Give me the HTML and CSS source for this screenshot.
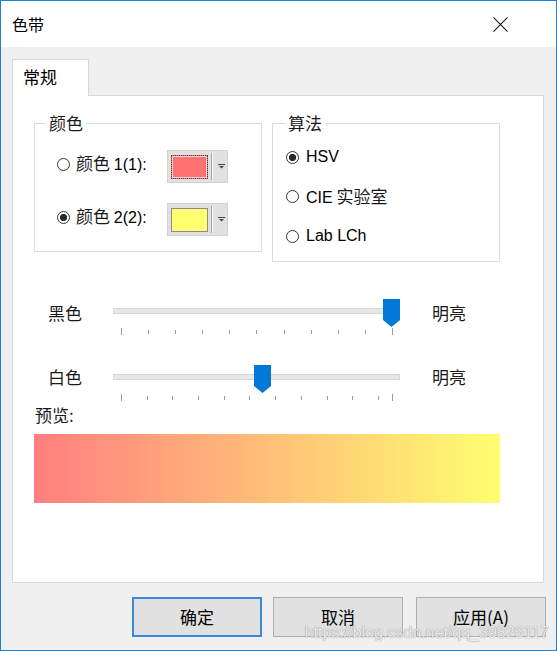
FILE: index.html
```html
<!DOCTYPE html>
<html lang="zh-CN">
<head>
<meta charset="utf-8">
<title>色带</title>
<link rel="stylesheet" href="styles.css">
</head>
<body>
<div class="window">
  <div class="titlebar">
    <span class="title">色带</span>
    <svg class="close" width="16" height="16" viewBox="0 0 16 16"><path d="M0.5 0.5 L15.5 15.5 M15.5 0.5 L0.5 15.5" stroke="#111" stroke-width="1.1" fill="none"/></svg>
  </div>
  <div class="body">
    <div class="tabs"><div class="tab">常规</div></div>
    <div class="panel">
      <div class="groups">
        <fieldset class="group group-color">
          <legend>颜色</legend>
          <div class="color-row">
            <span class="radio"></span>
            <span class="rlabel">颜色 <span class="lat">1(1):</span></span>
            <div class="swatch">
              <span class="chip chip-red"></span><span class="sep"></span>
              <svg class="arrow" width="7" height="5" viewBox="0 0 7 5"><path d="M0 0.5 H7" stroke="#444" stroke-width="1"/><path d="M1 2 H6 L3.5 4.6 Z" fill="#444"/></svg>
            </div>
          </div>
          <div class="color-row">
            <span class="radio on"></span>
            <span class="rlabel">颜色 <span class="lat">2(2):</span></span>
            <div class="swatch">
              <span class="chip chip-yellow"></span><span class="sep"></span>
              <svg class="arrow" width="7" height="5" viewBox="0 0 7 5"><path d="M0 0.5 H7" stroke="#444" stroke-width="1"/><path d="M1 2 H6 L3.5 4.6 Z" fill="#444"/></svg>
            </div>
          </div>
        </fieldset>
        <fieldset class="group group-algo">
          <legend>算法</legend>
          <div class="algo-row"><span class="radio on"></span><span class="lat">HSV</span></div>
          <div class="algo-row"><span class="radio"></span><span><span class="lat">CIE</span> 实验室</span></div>
          <div class="algo-row"><span class="radio"></span><span class="lat">Lab LCh</span></div>
        </fieldset>
      </div>

      <div class="slider-row first">
        <span class="slabel">黑色</span>
        <div class="slider">
          <div class="track"></div>
          <div class="ticks">
            <span class="tk long"></span><span class="tk"></span><span class="tk"></span><span class="tk"></span><span class="tk"></span><span class="tk"></span><span class="tk"></span><span class="tk"></span><span class="tk"></span><span class="tk"></span><span class="tk long"></span>
          </div>
          <span class="thumb thumb-black"></span>
        </div>
        <span class="slabel right">明亮</span>
      </div>

      <div class="slider-row second">
        <span class="slabel">白色</span>
        <div class="slider">
          <div class="track"></div>
          <div class="ticks">
            <div class="tick-group">
              <span class="tk long"></span><span class="tk"></span><span class="tk"></span><span class="tk"></span><span class="tk"></span><span class="tk"></span><span class="tk"></span><span class="tk"></span><span class="tk"></span><span class="tk"></span><span class="tk"></span>
            </div>
            <span class="tk long"></span>
          </div>
          <span class="thumb thumb-white"></span>
        </div>
        <span class="slabel right">明亮</span>
      </div>

      <div class="preview-label">预览:</div>
      <div class="preview"></div>
    </div>
    <div class="buttons">
      <button class="btn default">确定</button>
      <button class="btn">取消</button>
      <button class="btn apply">应用(A)</button>
    </div>
  </div>
  <div class="watermark">https://blog.csdn.net/qq_39826117</div>
</div>
</body>
</html>
```

FILE: styles.css
```css
html, body {
  margin: 0;
  padding: 0;
  background: #ffffff;
}

body {
  font-family: "Noto Sans CJK SC", "Liberation Sans", sans-serif;
  font-size: 17px;
  line-height: 20px;
  color: #111;
}

.window {
  position: relative;
  width: 557px;
  height: 651px;
  box-sizing: border-box;
  border: 1px solid #1883d7;
  display: flex;
  flex-direction: column;
}

.lat {
  font-family: "Liberation Sans", Arial, sans-serif;
  font-size: 16px;
  color: #000;
}

/* title bar */
.titlebar {
  height: 46px;
  flex: none;
  background: #fff;
  display: flex;
  align-items: center;
  justify-content: space-between;
  padding: 0 48px 0 11px;
}

.title {
  font-size: 16px;
  color: #000;
}

.close {
  display: block;
  width: 15px;
  height: 15px;
  margin-top: 1px;
}

/* body */
.body {
  flex: 1;
  background: #f0f0f0;
  padding: 12px 10px 0 11px;
  display: flex;
  flex-direction: column;
}

.tabs {
  display: flex;
}

.tab {
  position: relative;
  z-index: 1;
  width: 77px;
  height: 37px;
  box-sizing: border-box;
  border: 1px solid #d9d9d9;
  border-bottom: none;
  background: #fff;
  margin-bottom: -1px;
  padding: 7px 0 0 10px;
  font-size: 17px;
  color: #000;
}

.panel {
  width: 532px;
  height: 488px;
  box-sizing: border-box;
  border: 1px solid #d9d9d9;
  background: #fff;
  padding: 17px 0 0 21px;
}

/* group boxes */
.groups {
  display: flex;
  gap: 10px;
  align-items: flex-start;
}

.group {
  margin: 0;
  min-width: 0;
  width: 228px;
  box-sizing: border-box;
  border: 1px solid #dcdcdc;
}

.group legend {
  padding: 0 3px;
  font-size: 17px;
  line-height: 20px;
  color: #1a1a1a;
}

.group-color {
  padding: 17px 0 15px 22px;
  display: flex;
  flex-direction: column;
  gap: 20px;
}

.group-color legend {
  margin-left: -11px;
}

.group-algo {
  padding: 14px 0 15px 13px;
  display: flex;
  flex-direction: column;
  gap: 19.5px;
}

.group-algo legend {
  margin-left: -1px;
}

.radio {
  display: block;
  width: 13px;
  height: 13px;
  box-sizing: border-box;
  border: 1px solid #333;
  border-radius: 50%;
  background: #fff;
}

.radio.on {
  background: radial-gradient(circle, #2a2a2a 0 3.3px, #fff 3.9px);
}

.color-row {
  display: grid;
  grid-template-columns: 13px 85px 61px;
  column-gap: 6px;
  align-items: center;
  height: 33px;
}

.color-row .radio,
.color-row .rlabel {
  margin-bottom: 5px;
}

.rlabel {
  white-space: nowrap;
  color: #1a1a1a;
}

.swatch {
  width: 61px;
  height: 33px;
  box-sizing: border-box;
  background: #e1e1e1;
  border: 1px solid #d2d2d2;
  display: flex;
  align-items: center;
  padding-left: 3px;
}

.chip {
  display: block;
  width: 37px;
  height: 24px;
  box-sizing: border-box;
  border: 1px solid #8c8c8c;
}

.chip-red {
  background: #ff7070;
  border: 1px dotted #444;
  box-shadow: inset 0 0 0 1px #e8dada;
}

.chip-yellow {
  background: #ffff70;
}

.sep {
  display: block;
  width: 1px;
  height: 27px;
  margin-left: 3px;
  background: #a8a8a8;
  box-shadow: 1px 0 0 #f6f6f6;
}

.arrow {
  display: block;
  margin-left: 6px;
}

.algo-row {
  display: flex;
  align-items: center;
  gap: 7px;
  height: 20px;
  white-space: nowrap;
  color: #1a1a1a;
}

/* sliders */
.slider-row {
  display: grid;
  grid-template-columns: 65px 287px 1fr;
  margin: 30px 0 0 14px;
}

.slider-row.first {
  margin-top: 37px;
}

.slabel {
  margin-top: 4px;
  color: #1a1a1a;
}

.slider-row.second .slabel {
  margin-top: 2px;
}

.slabel.right {
  padding-left: 32px;
}

.slider {
  position: relative;
  height: 36px;
}

.track {
  margin-top: 9px;
  height: 6px;
  box-sizing: border-box;
  background: #e7e7e7;
  border: 1px solid #d6d6d6;
}

.ticks {
  margin: 14px 0 0 8px;
  width: 272px;
  height: 7px;
  display: flex;
  justify-content: space-between;
  align-items: center;
}

.tick-group {
  width: 258px;
  height: 7px;
  display: flex;
  justify-content: space-between;
  align-items: center;
}

.tk {
  display: block;
  width: 1px;
  height: 4px;
  background: #9a9a9a;
}

.tk.long {
  height: 7px;
}

.thumb {
  position: absolute;
  top: 0;
  width: 17px;
  height: 28px;
  background: #0078d7;
  clip-path: polygon(0 0, 100% 0, 100% 75%, 50% 100%, 0 75%);
}

.thumb-black {
  left: 270px;
}

.thumb-white {
  left: 141px;
}

/* preview */
.preview-label {
  margin: 4px 0 0 1px;
  color: #1a1a1a;
}

.preview {
  margin-top: 9px;
  width: 466px;
  height: 69px;
  background: linear-gradient(to right, #ff7f7f, #ffff70);
}

/* buttons */
.buttons {
  display: flex;
  justify-content: flex-end;
  margin-top: 14px;
}

.btn {
  width: 130px;
  height: 40px;
  box-sizing: border-box;
  border: 1px solid #adadad;
  background: #e1e1e1;
  font-family: "Noto Sans CJK SC", "Liberation Sans", sans-serif;
  font-size: 17px;
  line-height: 20px;
  color: #000;
  padding: 0;
  margin: 0 0 0 11px;
}

.btn.default {
  border: 2px solid #3a8ad8;
}

.btn.apply {
  margin-left: 13px;
}

.watermark {
  position: absolute;
  right: 7px;
  top: 624px;
  font-family: "Liberation Sans", Arial, sans-serif;
  font-size: 16px;
  line-height: 16px;
  color: rgba(250, 250, 250, 0.85);
  text-shadow: 0 0 1px #9a9a9a, 0 0 1px #9a9a9a;
  white-space: nowrap;
}
```
